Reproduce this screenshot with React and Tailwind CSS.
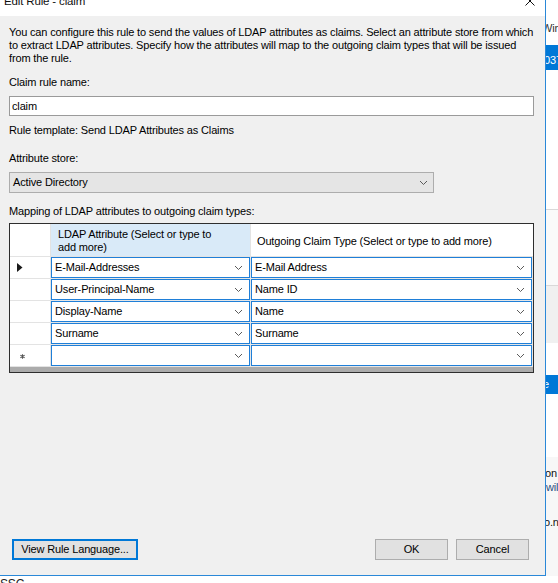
import React from "react";

function Chevron() {
  return (
    <svg width="9" height="6" viewBox="0 0 9 6" className="shrink-0">
      <path d="M1 1 L4.5 4.5 L8 1" fill="none" stroke="#5a5a5a" strokeWidth="1" />
    </svg>
  );
}

function RowArrow() {
  return (
    <svg width="6" height="9" viewBox="0 0 6 9">
      <polygon points="0,0 5.5,4.5 0,9" fill="#1a1a1a" />
    </svg>
  );
}

function RowStar() {
  return (
    <svg width="5" height="5" viewBox="0 0 5 5">
      <path d="M2.5 0.2 V4.8 M0.4 1.3 L4.6 3.7 M0.4 3.7 L4.6 1.3" stroke="#555" strokeWidth="1.1" />
    </svg>
  );
}

const rows = [
  { a: "E-Mail-Addresses", b: "E-Mail Address", mark: "arrow" },
  { a: "User-Principal-Name", b: "Name ID" },
  { a: "Display-Name", b: "Name" },
  { a: "Surname", b: "Surname" },
  { a: "", b: "", mark: "star" },
];

function ComboCell({ text }) {
  return (
    <div className="h-[22px] border-b border-r border-[#e6e6e6] bg-white">
      <div className="h-full border border-[#1f7fd8] bg-white flex items-center pl-[3px] pr-[6px]">
        <span className="flex-1 truncate">{text}</span>
        <Chevron />
      </div>
    </div>
  );
}

function Grid() {
  return (
    <div className="w-[525px] border border-[#2e2e2e] bg-white">
      <div className="grid grid-cols-[41px_200px_282px]">
        <div className="h-[33px] bg-white border-r border-b border-[#e3e3e3]" />
        <div className="h-[33px] bg-[#d9eaf8] border-r border-b border-[#e3e3e3] pl-[7px] pt-[4px] leading-[13px]">
          LDAP Attribute (Select or type to
          <br />
          add more)
        </div>
        <div className="h-[33px] bg-white border-b border-[#e3e3e3] pl-[6px] pt-[11px] leading-[13px]">
          Outgoing Claim Type (Select or type to add more)
        </div>
        {rows.map((r, i) => (
          <React.Fragment key={i}>
            <div className="h-[22px] bg-white border-r border-b border-[#e3e3e3] flex items-center pl-[7px]">
              {r.mark === "arrow" && <RowArrow />}
              {r.mark === "star" && (
                <span className="ml-[3px] mt-[1px] flex">
                  <RowStar />
                </span>
              )}
            </div>
            <ComboCell text={r.a} />
            <ComboCell text={r.b} />
          </React.Fragment>
        ))}
      </div>
      <div className="h-[5px] bg-[#ababab]" />
    </div>
  );
}

function Dialog() {
  return (
    <div className="w-[546px] h-[576px] shrink-0 flex flex-col border-r border-b border-[#2a88d8] bg-[#f0f0f0]">
      <div className="h-[16px] bg-white flex items-start justify-between overflow-hidden">
        <div className="pl-[4px] -mt-[5px] leading-[12px] text-[11.5px] text-[#111]">Edit Rule - claim</div>
        <svg width="10" height="10" viewBox="0 0 10 10" className="-mt-[4px] mr-[10px]">
          <path d="M0.5 0.5 L9.5 9.5 M9.5 0.5 L0.5 9.5" stroke="#111" strokeWidth="1" />
        </svg>
      </div>

      <div className="flex-1 flex flex-col pl-[9px] pt-[10px] pb-[15px]">
        <div className="leading-[13px] whitespace-nowrap">
          You can configure this rule to send the values of LDAP attributes as claims. Select an attribute store from which
          <br />
          to extract LDAP attributes. Specify how the attributes will map to the outgoing claim types that will be issued
          <br />
          from the rule.
        </div>

        <div className="mt-[11px] leading-[13px]">Claim rule name:</div>
        <div className="mt-[7px] w-[525px] h-[20px] border border-[#9a9a9a] bg-white flex items-center pl-[2px]">
          claim
        </div>

        <div className="mt-[8px] leading-[13px]">Rule template: Send LDAP Attributes as Claims</div>

        <div className="mt-[15px] leading-[13px]">Attribute store:</div>
        <div className="mt-[7px] w-[425px] h-[21px] border border-[#adadad] bg-[#e5e5e5] flex items-center pl-[3px] pr-[5px]">
          <span className="flex-1">Active Directory</span>
          <Chevron />
        </div>

        <div className="mt-[12px] leading-[13px]">Mapping of LDAP attributes to outgoing claim types:</div>
        <div className="mt-[5px]">
          <Grid />
        </div>

        <div className="flex-1" />

        <div className="flex items-center pr-[16px]">
          <button className="ml-[3px] w-[126px] h-[21px] border-2 border-[#0078d7] bg-[#e1e1e1] flex items-center justify-center leading-none">
            View Rule Language...
          </button>
          <div className="flex-1" />
          <button className="w-[73px] h-[21px] border border-[#adadad] bg-[#e1e1e1] flex items-center justify-center leading-none">
            OK
          </button>
          <button className="ml-[8px] w-[73px] h-[21px] border border-[#adadad] bg-[#e1e1e1] flex items-center justify-center leading-none">
            Cancel
          </button>
        </div>
      </div>
    </div>
  );
}

function RightStrip() {
  return (
    <div className="w-[12px] h-[576px] flex flex-col overflow-hidden bg-white whitespace-nowrap">
      <div className="h-[45px] pt-[22px] leading-[13px] text-[#333]">
        <span className="-ml-[4px]">Win</span>
      </div>
      <div className="h-[25px] bg-[#0078d7] text-white pt-[9px] leading-[13px]">
        <span className="-ml-[2px]">037</span>
      </div>
      <div className="h-[139px]" />
      <div className="h-px bg-[#d9d9d9]" />
      <div className="h-[75px] bg-[#fafafa]" />
      <div className="h-px bg-[#d9d9d9]" />
      <div className="h-[57px] bg-[#f0f0f0]" />
      <div className="h-[32px]" />
      <div className="h-[19px] bg-[#0078d7] text-white leading-[19px]">
        <span className="-ml-[3px]">e</span>
      </div>
      <div className="h-[63px]" />
      <div className="flex-1 bg-[#f7f7f7] pt-[10px] leading-[13px]">
        <div className="-ml-[1px] text-[#111]">on</div>
        <div className="mt-[1px] text-[#2b4f7e]">will</div>
        <div className="mt-[22px] -ml-[2px] text-[#111]">o.net</div>
      </div>
    </div>
  );
}

export default function App() {
  return (
    <div className="w-[558px] h-[583px] overflow-hidden bg-white flex flex-col text-[11px] tracking-[-0.15px] text-black font-['Liberation_Sans',Arial,sans-serif]">
      <div className="flex">
        <Dialog />
        <RightStrip />
      </div>
      <div className="h-[7px] overflow-hidden pt-[2px] leading-[12px] text-[12px] text-[#222]">SSC</div>
    </div>
  );
}
